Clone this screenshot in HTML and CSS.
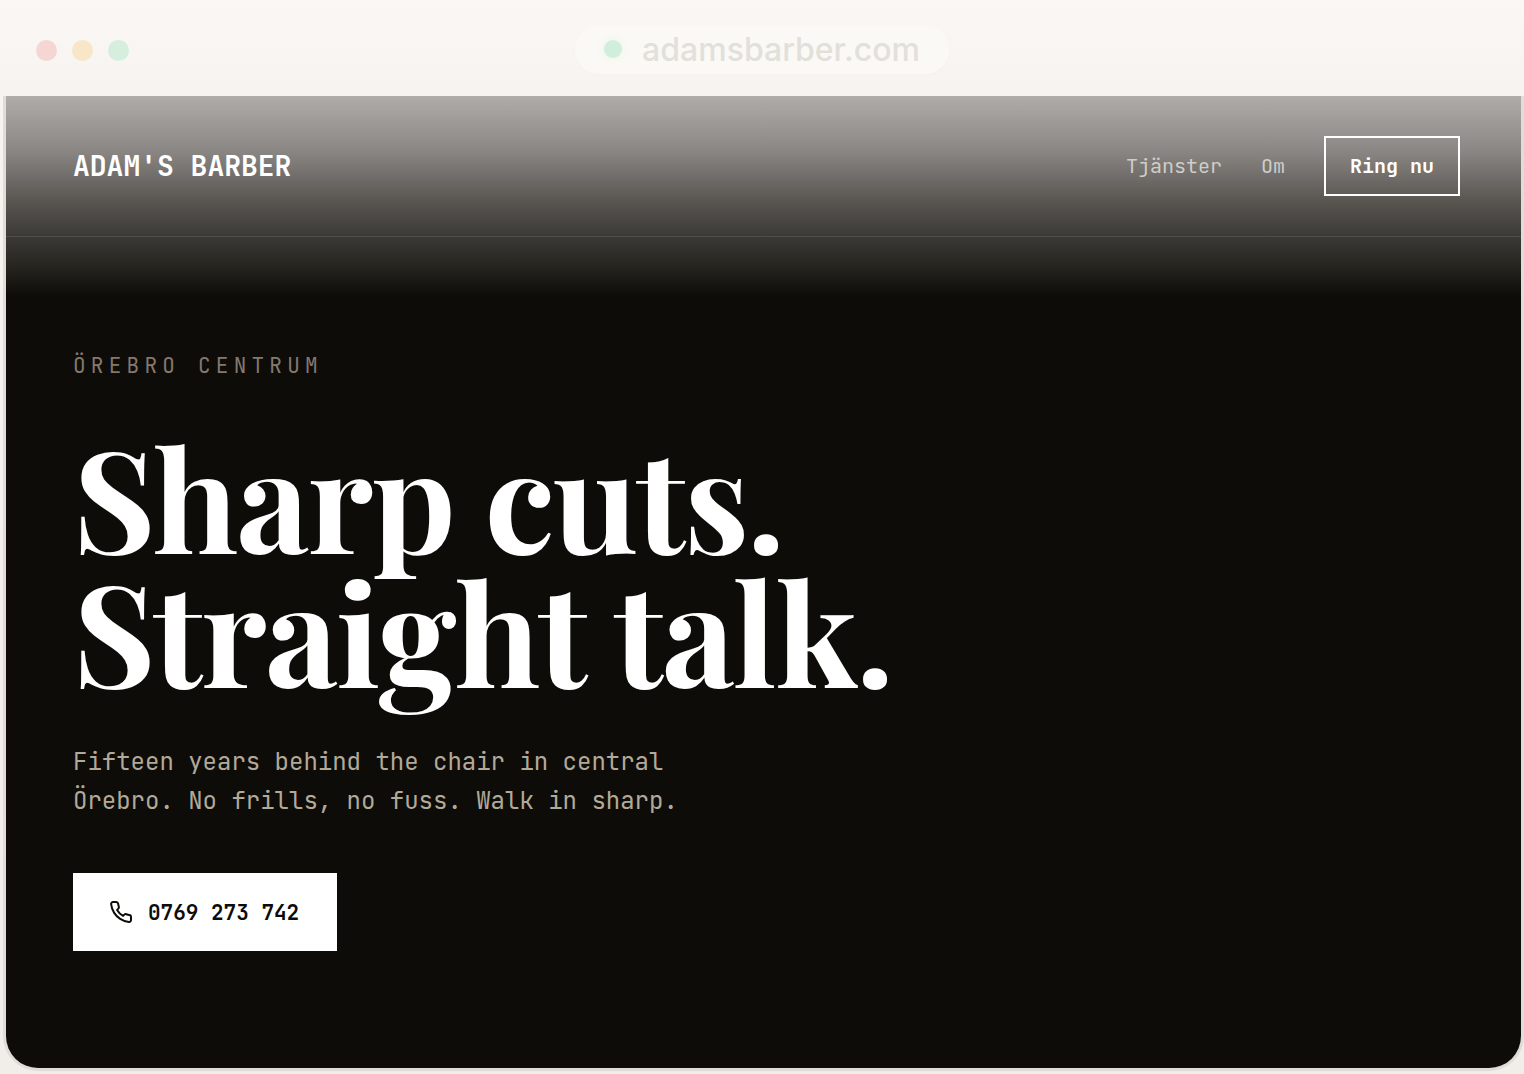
FILE: index.html
```html
<!DOCTYPE html>
<html lang="sv">
<head>
  <meta charset="UTF-8">
  <meta name="viewport" content="width=device-width, initial-scale=1.0">
  <title>Adam's Barber</title>
  <link rel="stylesheet" href="styles.css">
</head>
<body>

  <!-- Browser bar -->
  <div class="browser-bar">
    <div class="dots">
      <span class="dot red"></span>
      <span class="dot yellow"></span>
      <span class="dot green"></span>
    </div>
    <div class="address">
      <span class="status"></span>
      <span>adamsbarber.com</span>
    </div>
  </div>

  <!-- Site -->
  <div class="site">
    <header class="header">
      <a class="brand" href="#">ADAM'S BARBER</a>
      <nav class="nav">
        <a href="#tjanster">Tjänster</a>
        <a href="#om">Om</a>
        <a class="call" href="tel:0769273742">Ring nu</a>
      </nav>
    </header>

    <main class="hero">
      <p class="eyebrow">ÖREBRO CENTRUM</p>
      <h1>Sharp cuts.<br>Straight talk.</h1>
      <p class="lead">Fifteen years behind the chair in central Örebro. No frills, no fuss. Walk in sharp.</p>
      <a class="phone" href="tel:0769273742">
        <svg viewBox="0 0 24 24" fill="none" stroke="currentColor" stroke-width="2" stroke-linecap="round" stroke-linejoin="round" aria-hidden="true">
          <path d="M22 16.92v3a2 2 0 0 1-2.18 2 19.79 19.79 0 0 1-8.63-3.07 19.5 19.5 0 0 1-6-6 19.79 19.79 0 0 1-3.07-8.67A2 2 0 0 1 4.11 2h3a2 2 0 0 1 2 1.72 12.84 12.84 0 0 0 .7 2.81 2 2 0 0 1-.45 2.11L8.09 9.91a16 16 0 0 0 6 6l1.27-1.27a2 2 0 0 1 2.11-.45 12.84 12.84 0 0 0 2.81.7A2 2 0 0 1 22 16.92z"/>
        </svg>
        <span>0769 273 742</span>
      </a>
    </main>
  </div>

</body>
</html>
```
FILE: styles.css
```css
* {
  box-sizing: border-box;
}
body {
  margin: 0;
  min-height: 100vh;
  display: flex;
  flex-direction: column;
  background: linear-gradient(#fbf7f4, #f6f3f0 96px, #f1eeea);
  font-family: 'JetBrains Mono', 'DejaVu Sans Mono', monospace;
  color: #fff;
}
a {
  color: inherit;
  text-decoration: none;
}
h1, p {
  margin: 0;
}

/* browser bar */
.browser-bar {
  display: grid;
  grid-template-columns: 1fr auto 1fr;
  align-items: center;
  height: 96px;
  padding: 4px 36px 0;
}
.dots {
  display: flex;
  gap: 15px;
}
.dot {
  width: 21px;
  height: 21px;
  border-radius: 50%;
}
.red {
  background: #f5d6d2;
}
.yellow {
  background: #f8e6c8;
}
.green {
  background: #d5eedd;
}
.address {
  display: flex;
  align-items: center;
  gap: 20px;
  height: 48px;
  padding: 0 29px 2px;
  border-radius: 24px;
  background: #fbf9f5;
  box-shadow: 0 2px 4px rgba(0, 0, 0, 0.01);
  font-family: Inter, sans-serif;
  font-size: 32px;
  font-weight: 500;
  color: #e2e0db;
}
.status {
  width: 18px;
  height: 18px;
  border-radius: 50%;
  background: #d0eedb;
  box-shadow: 0 0 6px 3px #f1f7ee;
}

/* site */
.site {
  flex: 1;
  margin: 0 3px 6px 6px;
  border-radius: 0 0 32px 32px;
  background: #0d0c08 linear-gradient(#afaca9, #8a8784 54px, #595652 105px, #3b3935 141px, #25231e 172px, #0d0c08 200px);
  box-shadow: 0 0 0 3px #e0ddd8;
  clip-path: inset(0 -3px -3px -3px);
}
.header {
  display: flex;
  align-items: center;
  justify-content: space-between;
  padding: 40px 61px 40px 67px;
  border-bottom: 1px solid rgba(255, 255, 255, 0.1);
}
.brand {
  font-size: 28px;
  line-height: 36px;
  font-weight: 600;
}
.nav {
  display: flex;
  align-items: center;
  gap: 39px;
  font-size: 20px;
  line-height: 26px;
  color: #d0cdca;
}
.call {
  padding: 0 24px;
  border: 2px solid #fff;
  line-height: 56px;
  font-weight: 600;
  color: #fff;
}
.hero {
  padding: 113px 67px;
}
.eyebrow {
  margin-bottom: 46px;
  font-size: 21px;
  line-height: 32px;
  letter-spacing: 0.25em;
  color: #85786d;
}
h1 {
  margin-bottom: 46px;
  font-family: 'Playfair Display', 'Liberation Serif', serif;
  font-size: 141px;
  font-weight: 700;
  line-height: 134px;
  letter-spacing: -0.014em;
}
.lead {
  max-width: 640px;
  margin-bottom: 53px;
  font-size: 24px;
  line-height: 39px;
  color: #b3a999;
}
.phone {
  display: inline-flex;
  align-items: center;
  gap: 15px;
  height: 78px;
  padding: 0 38px 0 36px;
  background: #fff;
  color: #0d0c08;
  font-size: 21px;
  font-weight: 600;
}
.phone svg {
  width: 24px;
  height: 24px;
}
```
